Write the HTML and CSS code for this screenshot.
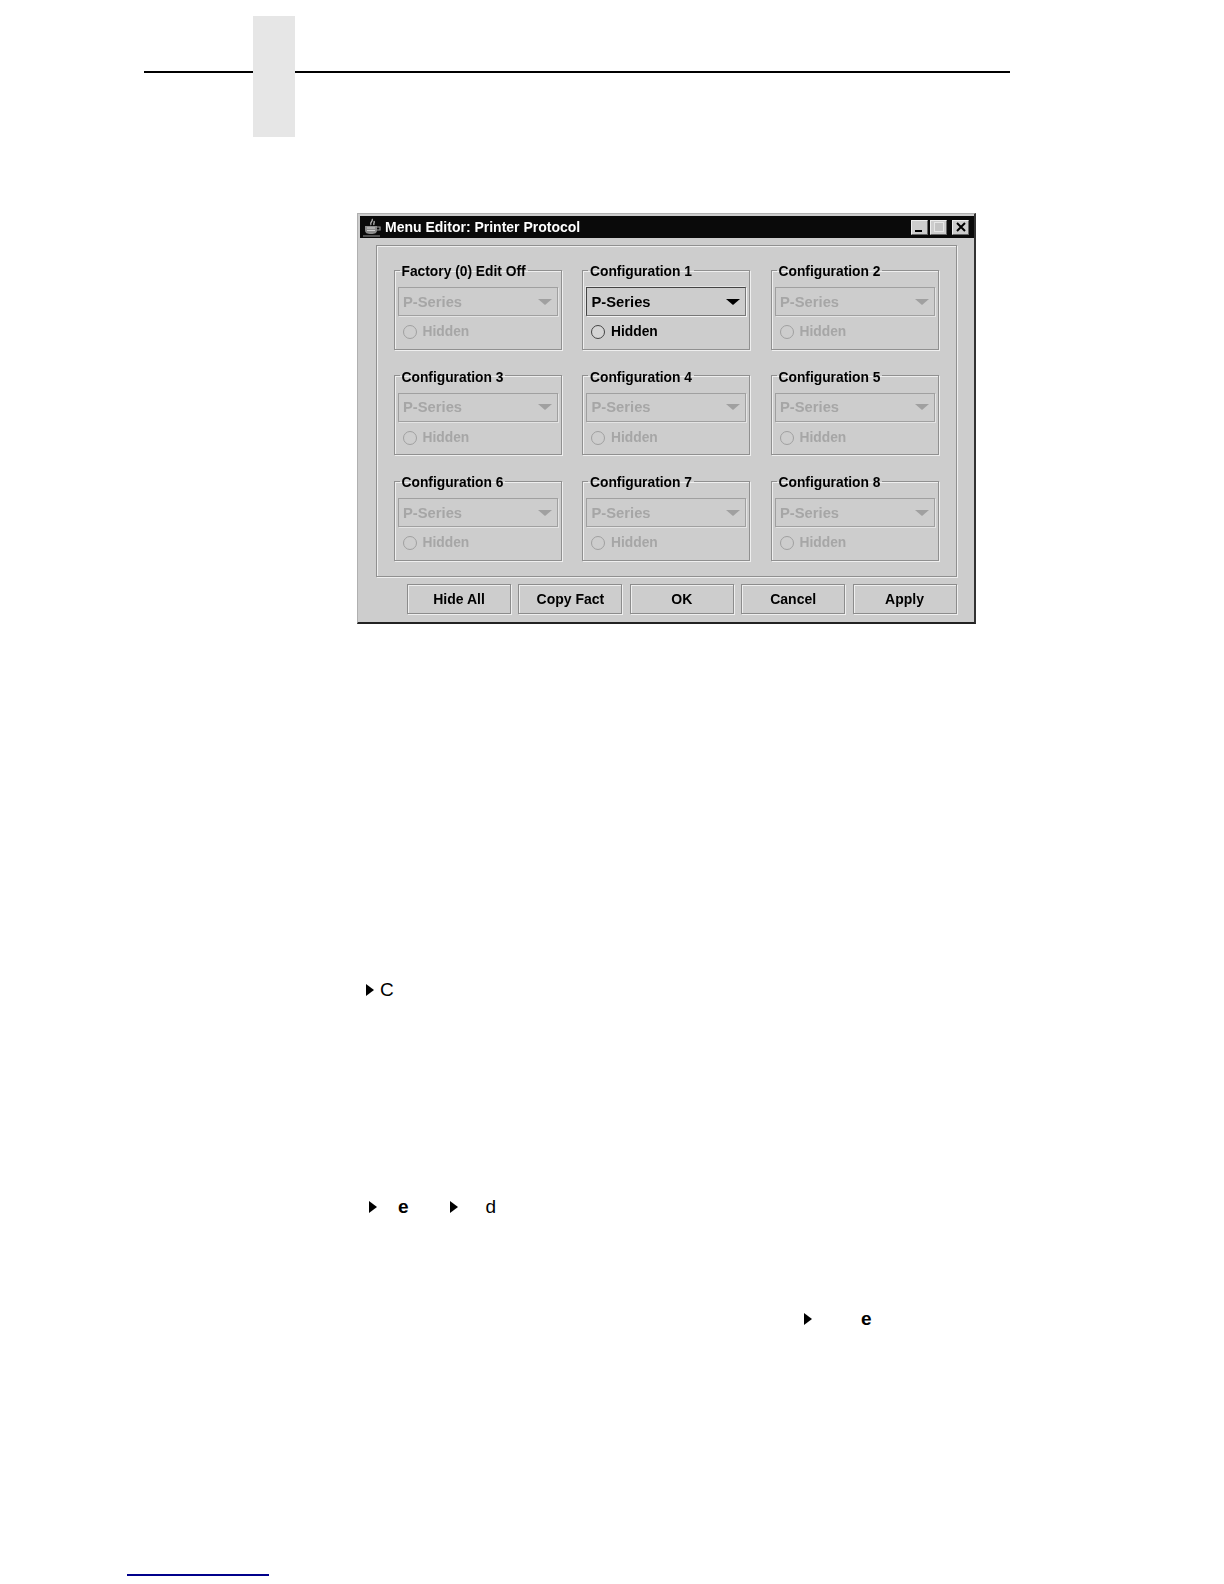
FILE: index.html
```html
<!DOCTYPE html>
<html lang="en">
<head>
<meta charset="utf-8">
<title>Menu Editor: Printer Protocol</title>
<link rel="stylesheet" href="styles.css">
</head>
<body>
<div class="page">
  <header class="header">
    <div class="rule rule-left"></div>
    <div class="tab"></div>
    <div class="rule rule-right"></div>
  </header>

  <section class="window">
    <div class="titlebar">
      <svg class="java" viewBox="0 0 20 20" width="20" height="20"><path d="M10 1c2 2-3 3-1 6M12 3c1 2-1 2 0 4" fill="none" stroke="#b0b0b0" stroke-width="1.4"/><path d="M3 8h12v4c0 3-2 4-6 4s-6-1-6-4z" fill="#8c8c8c"/><path d="M5 10h8M5 12.500h8" stroke="#d0d0d0"/><path d="M15 9h3v3h-3M1 18h17" fill="none" stroke="#999" stroke-width="1.2"/></svg>
      <span class="title">Menu Editor: Printer Protocol</span>
      <div class="controls">
        <span class="ctl"><i class="min"></i></span>
        <span class="ctl ctl-off"><i class="max"></i></span>
        <span class="ctl ctl-close"><svg viewBox="0 0 10 10" width="10" height="10"><path d="M1 1l8 8M9 1l-8 8" stroke="#000" stroke-width="2"/></svg></span>
      </div>
    </div>
    <div class="panel">
      <fieldset class="group off"><legend>Factory (0) Edit Off</legend><div class="combo"><span>P-Series</span><i class="arrow"></i></div><div class="radio"><i></i><span>Hidden</span></div></fieldset>
      <fieldset class="group on"><legend>Configuration 1</legend><div class="combo"><span>P-Series</span><i class="arrow"></i></div><div class="radio"><i></i><span>Hidden</span></div></fieldset>
      <fieldset class="group off"><legend>Configuration 2</legend><div class="combo"><span>P-Series</span><i class="arrow"></i></div><div class="radio"><i></i><span>Hidden</span></div></fieldset>
      <fieldset class="group off"><legend>Configuration 3</legend><div class="combo"><span>P-Series</span><i class="arrow"></i></div><div class="radio"><i></i><span>Hidden</span></div></fieldset>
      <fieldset class="group off"><legend>Configuration 4</legend><div class="combo"><span>P-Series</span><i class="arrow"></i></div><div class="radio"><i></i><span>Hidden</span></div></fieldset>
      <fieldset class="group off"><legend>Configuration 5</legend><div class="combo"><span>P-Series</span><i class="arrow"></i></div><div class="radio"><i></i><span>Hidden</span></div></fieldset>
      <fieldset class="group off"><legend>Configuration 6</legend><div class="combo"><span>P-Series</span><i class="arrow"></i></div><div class="radio"><i></i><span>Hidden</span></div></fieldset>
      <fieldset class="group off"><legend>Configuration 7</legend><div class="combo"><span>P-Series</span><i class="arrow"></i></div><div class="radio"><i></i><span>Hidden</span></div></fieldset>
      <fieldset class="group off"><legend>Configuration 8</legend><div class="combo"><span>P-Series</span><i class="arrow"></i></div><div class="radio"><i></i><span>Hidden</span></div></fieldset>
    </div>
    <div class="buttons">
      <button class="btn">Hide All</button>
      <button class="btn">Copy Fact</button>
      <button class="btn">OK</button>
      <button class="btn">Cancel</button>
      <button class="btn">Apply</button>
    </div>
  </section>

  <div class="line line-1"><i class="tri"></i><span class="g-c">C</span></div>
  <div class="line line-2"><i class="tri"></i><b class="g-e">e</b><i class="tri tri-2"></i><span class="g-d">d</span></div>
  <div class="line line-3"><i class="tri"></i><b class="g-e2">e</b></div>

  <footer class="foot"></footer>
</div>
</body>
</html>
```
FILE: styles.css
```css
* { box-sizing: border-box; }
html, body { margin: 0; padding: 0; background: #fff; }
body { font-family: "Liberation Sans", Arial, sans-serif; }
.page { width: 1224px; height: 1584px; overflow: hidden; }

.header { display: flex; align-items: flex-start; height: 121px; margin: 16px 0 0 144px; width: 866px; }
.rule { height: 2px; background: #000; margin-top: 55px; }
.rule-left { width: 109px; }
.rule-right { flex: 1; }
.tab { width: 42px; height: 121px; background: #e6e6e6; }

.window { width: 619px; height: 411px; margin: 76px 0 0 357px; background: #cdcdcd; border: 1px solid #b0b0b0; border-bottom: 2px solid #222; border-right: 2px solid #333; padding: 2px 0 0 2px; display: flex; flex-direction: column; filter: blur(0.5px); }
.titlebar { height: 22px; background: #0a0a0a; display: flex; align-items: center; padding: 0 5px 0 2px; color: #fff; }
.java { flex: none; margin-right: 3px; margin-top: 2px; }
.title { font-size: 14px; font-weight: bold; }
.controls { margin-left: auto; display: flex; gap: 2px; }
.ctl { width: 17px; height: 15px; background: #cdcdcd; border: 1px solid; border-color: #eee #666 #666 #eee; display: flex; align-items: center; justify-content: center; }
.ctl-off { margin-right: 3px; }
.min { display: block; width: 7px; height: 2px; background: #000; margin-top: 7px; margin-left: -3px; }
.max { display: block; width: 10px; height: 10px; border: 1px solid #e6e6e6; background: #c4c4c4; }

.panel { margin: 7px 0 0 16px; width: 581px; height: 332px; border: 1px solid #909090; box-shadow: 1px 1px 0 #efefef, inset 1px 1px 0 #efefef; padding: 14px 0 0 16.500px; display: grid; grid-template-columns: repeat(3, 168px); grid-auto-rows: 89.5px; column-gap: 20.5px; row-gap: 16px; }
.group { margin: 0; padding: 0 3px; min-width: 0; border: 1px solid #909090; box-shadow: 1px 1px 0 #efefef, inset 1px 1px 0 #efefef; height: 89.5px; }
.group legend { padding: 4px 2px 0; margin: 0 0 0 2px; font-size: 13.8px; font-weight: bold; line-height: 16px; color: #000; }
.combo { height: 29px; margin-top: 7px; border: 1px solid #a0a0a0; box-shadow: 1px 1px 0 #e4e4e4; display: flex; align-items: center; justify-content: space-between; padding: 0 5px 0 4.5px; font-size: 14.75px; font-weight: bold; }
.arrow { width: 0; height: 0; border-left: 7px solid transparent; border-right: 7px solid transparent; border-top: 6px solid #a0a0a0; }
.radio { display: flex; align-items: center; gap: 6px; margin: 8px 0 0 5px; font-size: 13.8px; font-weight: bold; line-height: 16px; }
.radio i { width: 14px; height: 14px; border-radius: 50%; border: 1px solid #a0a0a0; display: block; flex: none; }
.off .combo, .off .radio { color: #a6a6a6; }
.on .combo { border: 1px solid; border-color: #444 #777 #777 #444; box-shadow: 1px 1px 0 #f4f4f4, -1px -1px 0 #e4e4e4; color: #000; }
.on .arrow { border-top-color: #000; }
.on .radio { color: #000; }
.on .radio i { border-color: #444; background: #d4d4d4; }

.buttons { display: flex; gap: 7.4px; margin: 7px 0 0 47px; }
.btn { width: 104px; height: 30px; padding: 0; background: #cdcdcd; border: 1px solid #8c8c8c; box-shadow: 1px 1px 0 #efefef, inset 1px 1px 0 #efefef; font: bold 14px "Liberation Sans", Arial, sans-serif; color: #000; }

.line { display: flex; align-items: center; height: 22px; font-size: 19px; color: #000; }
.tri { width: 0; height: 0; display: block; flex: none; border-top: 6.5px solid transparent; border-bottom: 6.5px solid transparent; border-left: 8px solid #000; }
.line-1 { margin: 355px 0 0 366px; }
.g-c { margin-left: 6px; }
.line-2 { margin: 195px 0 0 369px; }
.g-e { margin-left: 21px; }
.tri-2 { margin-left: 41px; }
.g-d { margin-left: 28px; }
.line-3 { margin: 90px 0 0 804px; }
.g-e2 { margin-left: 49px; }

.foot { width: 142px; height: 2px; background: #00008b; margin: 244px 0 0 127px; }
```
